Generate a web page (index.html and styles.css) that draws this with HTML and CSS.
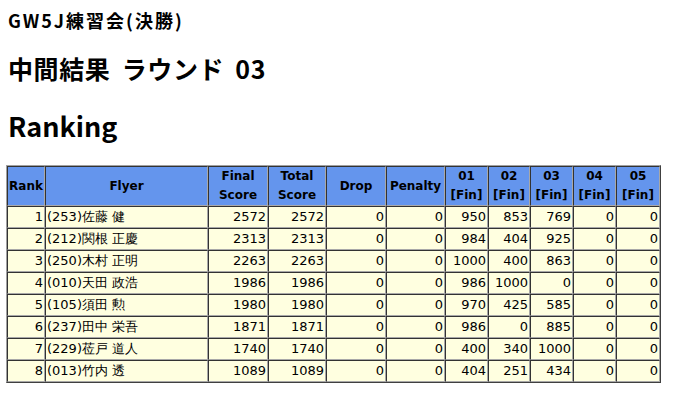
FILE: index.html
```html
<!DOCTYPE html>
<html lang="ja">
<head>
<meta charset="utf-8">
<title>GW5J練習会(決勝)</title>
<link rel="stylesheet" href="styles.css">
</head>
<body>
<h3 class="title">GW5J練習会(決勝)</h3>
<h2 class="subtitle">中間結果 ラウンド 03</h2>
<h1 class="ranking">Ranking</h1>
<table class="results">
<thead>
<tr>
<th class="c-rank">Rank</th>
<th class="c-flyer">Flyer</th>
<th class="c-final">Final<br>Score</th>
<th class="c-total">Total<br>Score</th>
<th class="c-drop">Drop</th>
<th class="c-pen">Penalty</th>
<th class="c-r1">01<br>[Fin]</th>
<th class="c-r2">02<br>[Fin]</th>
<th class="c-r3">03<br>[Fin]</th>
<th class="c-r4">04<br>[Fin]</th>
<th class="c-r5">05<br>[Fin]</th>
</tr>
</thead>
<tbody>
<tr><td>1</td><td class="name">(253)佐藤 健</td><td>2572</td><td>2572</td><td>0</td><td>0</td><td>950</td><td>853</td><td>769</td><td>0</td><td>0</td></tr>
<tr><td>2</td><td class="name">(212)関根 正慶</td><td>2313</td><td>2313</td><td>0</td><td>0</td><td>984</td><td>404</td><td>925</td><td>0</td><td>0</td></tr>
<tr><td>3</td><td class="name">(250)木村 正明</td><td>2263</td><td>2263</td><td>0</td><td>0</td><td>1000</td><td>400</td><td>863</td><td>0</td><td>0</td></tr>
<tr><td>4</td><td class="name">(010)天田 政浩</td><td>1986</td><td>1986</td><td>0</td><td>0</td><td>986</td><td>1000</td><td>0</td><td>0</td><td>0</td></tr>
<tr><td>5</td><td class="name">(105)須田 勲</td><td>1980</td><td>1980</td><td>0</td><td>0</td><td>970</td><td>425</td><td>585</td><td>0</td><td>0</td></tr>
<tr><td>6</td><td class="name">(237)田中 栄吾</td><td>1871</td><td>1871</td><td>0</td><td>0</td><td>986</td><td>0</td><td>885</td><td>0</td><td>0</td></tr>
<tr><td>7</td><td class="name">(229)莅戸 道人</td><td>1740</td><td>1740</td><td>0</td><td>0</td><td>400</td><td>340</td><td>1000</td><td>0</td><td>0</td></tr>
<tr><td>8</td><td class="name">(013)竹内 透</td><td>1089</td><td>1089</td><td>0</td><td>0</td><td>404</td><td>251</td><td>434</td><td>0</td><td>0</td></tr>
</tbody>
</table>
</body>
</html>
```
FILE: styles.css
```css
html, body {
  margin: 0;
  padding: 0;
  background: #ffffff;
  color: #000000;
}
body {
  padding: 8px 6px;
  font-family: "DejaVu Sans", Verdana, sans-serif;
  font-size: 13px;
}
.title, .subtitle, .ranking {
  font-family: "Noto Sans CJK JP", "Open Sans", sans-serif;
  font-weight: bold;
  margin: 0;
  padding-left: 2px;
}
.title {
  font-size: 18px;
  line-height: 24px;
  letter-spacing: 2px;
  margin-bottom: 20px;
}
.subtitle {
  font-size: 25px;
  line-height: 32px;
  letter-spacing: 0.6px;
  word-spacing: 5px;
  margin-bottom: 24px;
}
.ranking {
  font-size: 27px;
  line-height: 36px;
  margin-bottom: 21px;
}
.results {
  table-layout: fixed;
  width: 655px;
  border-collapse: separate;
  border-spacing: 0;
  border-top: 1px solid #a0a0a0;
  border-left: 1px solid #a0a0a0;
  border-right: 1px solid #404040;
  border-bottom: 1px solid #404040;
}
.results th, .results td {
  border-top: 1px solid #333333;
  border-left: 1px solid #333333;
  border-right: 1px solid #a8a8a8;
  border-bottom: 1px solid #a8a8a8;
  padding: 0 1px;
  overflow: hidden;
  white-space: nowrap;
}
.results th {
  background: #6495ed;
  font-size: 12px;
  font-weight: bold;
  text-align: center;
  vertical-align: middle;
  height: 37px;
  line-height: 19px;
}
.results td {
  background: #ffffe0;
  text-align: right;
  height: 20px;
  line-height: 20px;
}
.results td.name {
  text-align: left;
}
.c-rank { width: 34px; }
.c-flyer { width: 159px; }
.c-final { width: 56px; }
.c-total { width: 54px; }
.c-drop { width: 56px; }
.c-pen { width: 55px; }
.c-r1 { width: 39px; }
.c-r2 { width: 38px; }
.c-r3 { width: 39px; }
.c-r4 { width: 39px; }
.c-r5 { width: 40px; }
```
